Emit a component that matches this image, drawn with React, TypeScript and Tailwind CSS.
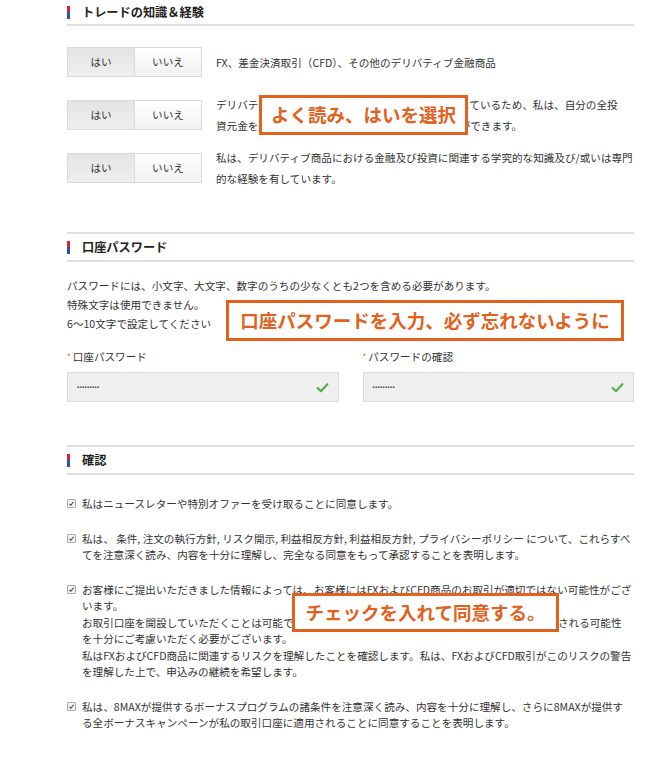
import React from "react";

const font = { fontFamily: '"Noto Sans CJK JP", "Noto Sans", sans-serif' };

function SectionHeader({ title, top = true }: { title: string; top?: boolean }) {
  return (
    <div
      className={`flex items-center gap-[12px] border-b-2 border-[#dedede] ${
        top ? "border-t-2 h-[30px]" : "h-[26px]"
      }`}
    >
      <span className="flex flex-col w-[3px] h-[13px]">
        <span className="flex-1 bg-[#d8262c]" />
        <span className="flex-1 bg-[#2d4fb0]" />
      </span>
      <span className="text-[12.2px] font-bold text-[#222]">{title}</span>
    </div>
  );
}

function YesNo() {
  return (
    <div className="flex shrink-0 w-[135px] h-[30px] border border-[#dadada] text-[10.6px] text-[#333]">
      <span className="flex-1 flex items-center justify-center bg-gradient-to-b from-[#e4e4e4] to-[#efefef] border-r border-[#dadada]">
        はい
      </span>
      <span className="flex-1 flex items-center justify-center bg-gradient-to-b from-white to-[#f1f1f1]">
        いいえ
      </span>
    </div>
  );
}

function Check() {
  return (
    <svg width="13" height="13" viewBox="0 0 24 24" className="shrink-0">
      <path d="M3 13l6 6L21 6" fill="none" stroke="#4caf50" strokeWidth="4" strokeLinecap="round" strokeLinejoin="round" />
    </svg>
  );
}

function Box() {
  return (
    <span className="mt-[3px] flex items-center justify-center w-[9px] h-[9px] shrink-0 border border-[#aaa] bg-[#f4f4f4] rounded-[1px]">
      <svg width="7" height="7" viewBox="0 0 10 10">
        <path d="M2 5.5l2 2L8 2.5" fill="none" stroke="#444" strokeWidth="1.6" />
      </svg>
    </span>
  );
}

function Overlay({ text, className }: { text: string; className: string }) {
  return (
    <div
      className={`absolute flex items-center justify-center bg-white border-[3px] border-[#e2611c] text-[18.5px] font-bold text-[#e2611c] ${className}`}
    >
      {text}
    </div>
  );
}

const rows: string[][] = [
  ["FX、差金決済取引（CFD）、その他のデリバティブ金融商品"],
  [
    "デリバティブ商品の取引に伴うリスクを十分に理解しているため、私は、自分の全投",
    "資元金を失う可能性を含めたリスクを評価することができます。",
  ],
  [
    "私は、デリバティブ商品における金融及び投資に関連する学究的な知識及び/或いは専門",
    "的な経験を有しています。",
  ],
];

const items: string[][] = [
  ["私はニュースレターや特別オファーを受け取ることに同意します。"],
  [
    "私は、 条件, 注文の執行方針, リスク開示, 利益相反方針, 利益相反方針, プライバシーポリシー について、これらすべ",
    "てを注意深く読み、内容を十分に理解し、完全なる同意をもって承認することを表明します。",
  ],
  [
    "お客様にご提出いただきました情報によっては、お客様にはFXおよびCFD商品のお取引が適切ではない可能性がござ",
    "います。",
    "お取引口座を開設していただくことは可能ですが、その際はお客様が非常に大きな損失リスクにさらされる可能性",
    "を十分にご考慮いただく必要がございます。",
    "私はFXおよびCFD商品に関連するリスクを理解したことを確認します。私は、FXおよびCFD取引がこのリスクの警告",
    "を理解した上で、申込みの継続を希望します。",
  ],
  [
    "私は、8MAXが提供するボーナスプログラムの諸条件を注意深く読み、内容を十分に理解し、さらに8MAXが提供す",
    "る全ボーナスキャンペーンが私の取引口座に適用されることに同意することを表明します。",
  ],
];

export default function App() {
  return (
    <div className="min-h-[779px] bg-white text-[#333]" style={font}>
      <div className="relative ml-[67px] w-[567px]">
        {/* Trade knowledge */}
        <SectionHeader title="トレードの知識＆経験" top={false} />
        <div className="flex flex-col gap-[11px] pt-[15px]">
          {rows.map((r) => (
            <div key={r[0]} className="flex items-center gap-[14px] h-[42px]">
              <YesNo />
              <p className="text-[10.6px] leading-[21px] whitespace-nowrap">
                {r.map((line, i) => (
                  <span key={i} className="block">
                    {line}
                  </span>
                ))}
              </p>
            </div>
          ))}
        </div>

        {/* Password */}
        <div className="mt-[43px]">
          <SectionHeader title="口座パスワード" />
        </div>
        <p className="mt-[14px] text-[10.6px] leading-[19px]">
          パスワードには、小文字、大文字、数字のうちの少なくとも2つを含める必要があります。
          <br />
          特殊文字は使用できません。
          <br />
          6〜10文字で設定してください
        </p>
        <div className="mt-[14px] grid grid-cols-2 gap-x-[24px]">
          {["口座パスワード", "パスワードの確認"].map((l) => (
            <div key={l} className="flex flex-col gap-[6px]">
              <span className="text-[10.6px] leading-[19px]">
                <span className="text-[#e53935] text-[8px] align-top mr-[2px]">*</span>
                {l}
              </span>
              <div className="flex items-center justify-between h-[30px] px-[9px] bg-[#efefef] border border-[#dcdcdc]">
                <span className="text-[6.5px] tracking-[0.3px] text-[#555]">•••••••••</span>
                <Check />
              </div>
            </div>
          ))}
        </div>

        {/* Confirmation */}
        <div className="mt-[43px]">
          <SectionHeader title="確認" />
        </div>
        <div className="flex flex-col gap-[18px] pt-[21px] text-[10.6px] leading-[16.5px]">
          {items.map((it) => (
            <div key={it[0]} className="flex gap-[6px]">
              <Box />
              <p className="whitespace-nowrap">
                {it.map((line, i) => (
                  <span key={i} className="block">
                    {line}
                  </span>
                ))}
              </p>
            </div>
          ))}
        </div>

        <Overlay text="よく読み、はいを選択" className="left-[192px] top-[95px] w-[209px] h-[40px]" />
        <Overlay text="口座パスワードを入力、必ず忘れないように" className="left-[159px] top-[300px] w-[398px] h-[41px]" />
        <Overlay text="チェックを入れて同意する。" className="left-[225px] top-[593px] w-[267px] h-[39px]" />
      </div>
    </div>
  );
}
